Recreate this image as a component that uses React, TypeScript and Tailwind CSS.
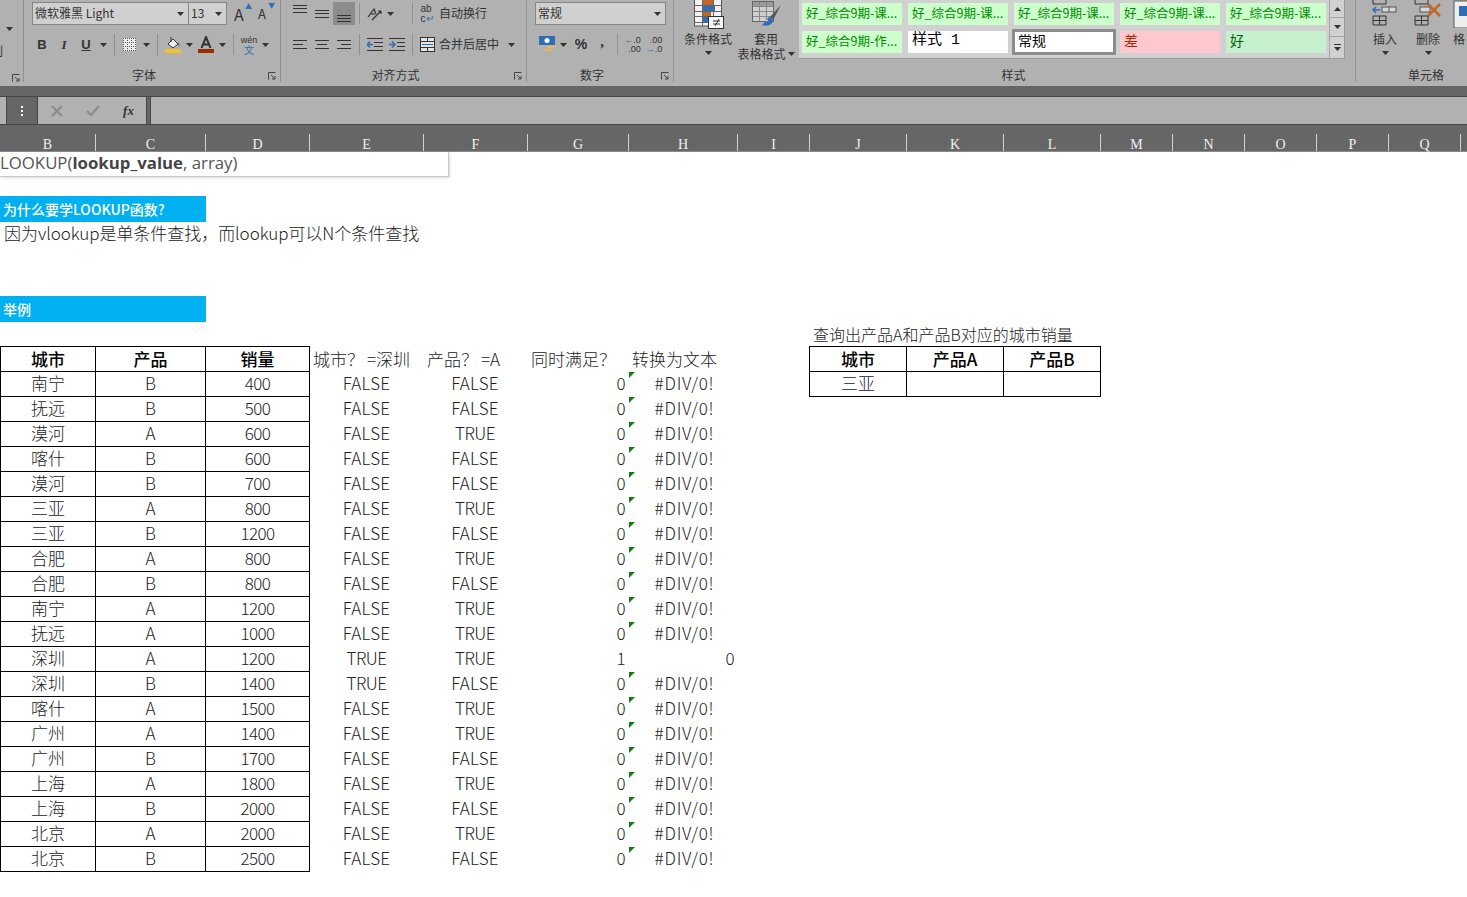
import React from 'react'

const data: [string, string, number][] = [
  ['南宁', 'B', 400], ['抚远', 'B', 500], ['漠河', 'A', 600], ['喀什', 'B', 600], ['漠河', 'B', 700],
  ['三亚', 'A', 800], ['三亚', 'B', 1200], ['合肥', 'A', 800], ['合肥', 'B', 800], ['南宁', 'A', 1200],
  ['抚远', 'A', 1000], ['深圳', 'A', 1200], ['深圳', 'B', 1400], ['喀什', 'A', 1500], ['广州', 'A', 1400],
  ['广州', 'B', 1700], ['上海', 'A', 1800], ['上海', 'B', 2000], ['北京', 'A', 2000], ['北京', 'B', 2500],
]

const headers = ['B', 'C', 'D', 'E', 'F', 'G', 'H', 'I', 'J', 'K', 'L', 'M', 'N', 'O', 'P', 'Q']

const Caret = ({ className = '' }: { className?: string }) => (
  <svg width="7" height="4" viewBox="0 0 7 4" className={className}><path d="M0 0h7L3.5 4z" fill="#333" /></svg>
)

const Sep = () => <div className="w-px h-[21px] bg-[#8f8f8f] shrink-0" />

const Launcher = () => (
  <svg width="8" height="8" viewBox="0 0 8 8" className="shrink-0">
    <path d="M0.5 7.5V0.5H7.5M3 3L7 7M7 4V7H4" fill="none" stroke="#444" strokeWidth="1" />
  </svg>
)

const Slot = ({ w = 22, children, active }: { w?: number; children?: React.ReactNode; active?: boolean }) => (
  <div className={`h-[23px] flex items-center justify-center shrink-0 ${active ? 'bg-[#8c8c8c]' : ''}`} style={{ width: w }}>{children}</div>
)

// 对齐图标: 三条横线
const Lines = ({ ys, widths = [14, 14, 14], align = 'l' }: { ys: number[]; widths?: number[]; align?: 'l' | 'c' | 'r' }) => (
  <svg width="14" height="22" viewBox="0 0 14 22">
    {ys.map((y, i) => {
      const x = align === 'l' ? 0 : align === 'r' ? 14 - widths[i] : (14 - widths[i]) / 2
      return <rect key={i} x={x} y={y} width={widths[i]} height="1" fill="#333" />
    })}
  </svg>
)

const Combo = ({ label, w, className = '' }: { label: string; w: number; className?: string }) => (
  <div className={`h-[23px] bg-[#d0d0d0] border border-[#858585] flex items-center justify-between pl-[2px] pr-[4px] text-[12px] text-[#333] shrink-0 ${className}`} style={{ width: w }}>
    <span className="pb-[2px]">{label}</span>
    <Caret />
  </div>
)

const GroupFooter = ({ label, launcher = true }: { label: string; launcher?: boolean }) => (
  <div className="absolute -bottom-[1px] left-0 right-[4px] flex items-center justify-center text-[12px] leading-[16px] text-[#333]">
    <span className={launcher ? 'pr-[12px]' : 'pl-[2px]'}>{label}</span>
    {launcher && <span className="absolute right-0 top-[5px]"><Launcher /></span>}
  </div>
)

const Group = ({ w, label, launcher, children }: { w: number; label: string; launcher?: boolean; children: React.ReactNode }) => (
  <div className="relative h-[82px] shrink-0 border-r border-[#8f8f8f]" style={{ width: w }}>
    {children}
    <GroupFooter label={label} launcher={launcher} />
  </div>
)

const StyleChip = ({ label, className }: { label: string; className: string }) => (
  <div className={`h-[22px] flex items-center pl-[4px] whitespace-nowrap overflow-hidden ${className}`}>{label}</div>
)

function Ribbon() {
  const green = 'bg-[#ccffcc] text-[#008a00] text-[12.500px] pb-[2px]'
  return (
    <div className="h-[86px] bg-[#b1b1b1] flex overflow-hidden text-[#333]">
      <div className="relative w-[24px] h-[82px] shrink-0 border-r border-[#8f8f8f]">
        <Caret className="absolute left-[6px] top-[27px]" />
        <span className="absolute left-[-9px] top-[42px] text-[12px]">刷</span>
        <span className="absolute right-[3px] bottom-[0px]"><Launcher /></span>
      </div>

      {/* 字体 */}
      <Group w={257} label="字体" launcher>
        <div className="flex items-center pl-[8px] pt-[2px]">
          <Combo label="微软雅黑 Light" w={157} />
          <Combo label="13" w={39} className="-ml-px" />
          <div className="ml-[7px] text-[16px] leading-none relative w-[16px]">A<span className="absolute -right-[2px] top-[-3px] text-[#2f6db5] text-[7px]">▲</span></div>
          <div className="ml-[8px] text-[13px] leading-none relative w-[14px]">A<span className="absolute -right-[3px] top-[-5px] text-[#2f6db5] text-[7px]">▼</span></div>
        </div>
        <div className="flex items-center pl-[7px] mt-[8px]">
          <Slot><b className="text-[13px] font-['Liberation_Sans',sans-serif]">B</b></Slot>
          <Slot><i className="text-[13px] font-bold font-['Liberation_Serif',serif]">I</i></Slot>
          <Slot><b className="text-[13px] underline font-['Liberation_Sans',sans-serif]">U</b></Slot>
          <Slot w={13}><Caret /></Slot>
          <div className="ml-[4px]"><Sep /></div>
          <div className="ml-[3px]"><Slot>
            <svg width="13" height="13" viewBox="0 0 13 13"><rect width="13" height="13" fill="#ececec" /><path d="M0 .5h13M0 4.500h13M0 8.500h13M0 12.500h13M.5 0v13M4.500 0v13M8.500 0v13M12.500 0v13" stroke="#555" strokeDasharray="1 1" /></svg>
          </Slot></div>
          <Slot w={13}><Caret /></Slot>
          <div className="ml-[4px]"><Sep /></div>
          <div className="ml-[4px]"><Slot>
            <svg width="16" height="17" viewBox="0 0 16 17"><path d="M3 8L8 3l5 5-5 4z" fill="#eee" stroke="#333" /><path d="M6 1v5" stroke="#333" /><path d="M13 6c2 1 2 4 1 5z" fill="#2f6db5" /><rect y="13" width="16" height="4" fill="#f0c428" /></svg>
          </Slot></div>
          <Slot w={11}><Caret /></Slot>
          <Slot>
            <svg width="16" height="17" viewBox="0 0 16 17"><path d="M3.500 12L8 1l4.500 11M5 8.500h6" fill="none" stroke="#333" strokeWidth="2" /><rect y="13" width="16" height="4" fill="#9c2a00" /></svg>
          </Slot>
          <Slot w={11}><Caret /></Slot>
          <div className="ml-[5px]"><Sep /></div>
          <div className="ml-[4px]"><Slot>
            <div className="flex flex-col items-center">
              <span className="text-[9px] leading-[10px] font-['Liberation_Sans',sans-serif]">wén</span>
              <span className="text-[10px] leading-[10px] text-[#2f6db5]">文</span>
            </div>
          </Slot></div>
          <Slot w={11}><Caret /></Slot>
        </div>
      </Group>

      {/* 对齐方式 */}
      <Group w={246} label="对齐方式" launcher>
        <div className="flex items-center pl-[8px] pt-[2px]">
          <Slot><Lines ys={[2, 5, 9]} /></Slot>
          <Slot><Lines ys={[7, 10, 14]} /></Slot>
          <Slot active><Lines ys={[12, 15, 18]} /></Slot>
          <div className="ml-[4px]"><Sep /></div>
          <div className="ml-[4px]"><Slot>
            <svg width="16" height="16" viewBox="0 0 16 16"><path d="M1 11L7 3l2 5M3 8h5M5 14L14 5M14 5h-3M14 5v3" fill="none" stroke="#333" strokeWidth="1.200" /></svg>
          </Slot></div>
          <Slot w={8}><Caret /></Slot>
          <div className="ml-[18px]"><Sep /></div>
          <div className="ml-[4px]"><Slot w={20}>
            <div className="flex flex-col items-start font-['Liberation_Sans',sans-serif]">
              <span className="text-[10px] leading-[10px]">ab</span>
              <span className="text-[10px] leading-[10px]">c<span className="text-[#2f6db5]">↵</span></span>
            </div>
          </Slot></div>
          <span className="ml-[2px] pb-[2px] text-[12px]">自动换行</span>
        </div>
        <div className="flex items-center pl-[8px] mt-[8px]">
          <Slot><Lines ys={[6, 10, 14]} widths={[14, 10, 14]} /></Slot>
          <Slot><Lines ys={[6, 10, 14]} widths={[14, 10, 14]} align="c" /></Slot>
          <Slot><Lines ys={[6, 10, 14]} widths={[14, 10, 14]} align="r" /></Slot>
          <div className="ml-[4px]"><Sep /></div>
          <div className="ml-[4px]"><Slot>
            <svg width="16" height="14" viewBox="0 0 16 14"><path d="M0 .5h16M7 4.500h9M7 8.500h9M0 12.500h16" stroke="#333" /><path d="M0 6.500h6M3 3.500L0 6.500l3 3" stroke="#2f6db5" strokeWidth="1.500" fill="none" /></svg>
          </Slot></div>
          <Slot>
            <svg width="16" height="14" viewBox="0 0 16 14"><path d="M0 .5h16M8 4.500h8M8 8.500h8M0 12.500h16" stroke="#333" /><path d="M0 6.500h6M3 3.500l3 3-3 3" stroke="#2f6db5" strokeWidth="1.500" fill="none" /></svg>
          </Slot>
          <div className="ml-[4px]"><Sep /></div>
          <div className="ml-[4px]"><Slot w={20}>
            <svg width="15" height="15" viewBox="0 0 15 15"><rect x=".5" y=".5" width="14" height="14" fill="#e4e4e4" stroke="#333" /><path d="M0 4.500h15M0 10.500h15M7.500 0v4M7.500 11v4" stroke="#333" /><path d="M2 7.500h11" stroke="#2f6db5" /></svg>
          </Slot></div>
          <span className="ml-[2px] pb-[2px] text-[12px]">合并后居中</span>
          <Caret className="ml-[9px]" />
        </div>
      </Group>

      {/* 数字 */}
      <Group w={147} label="数字" launcher>
        <div className="flex items-center pl-[8px] pt-[2px]">
          <Combo label="常规" w={131} />
        </div>
        <div className="flex items-center pl-[8px] mt-[8px]">
          <Slot w={24}>
            <svg width="17" height="18" viewBox="0 0 17 18"><rect width="16" height="9" fill="#2f6db5" /><circle cx="8" cy="4.500" r="2.500" fill="#fff" /><ellipse cx="12" cy="11" rx="4" ry="1.500" fill="#d9b86a" /><ellipse cx="9" cy="14" rx="4" ry="1.500" fill="#d9b86a" /></svg>
          </Slot>
          <Slot w={8}><Caret /></Slot>
          <div className="ml-[3px]"><Slot><span className="text-[14px] font-semibold font-['Liberation_Sans',sans-serif]">%</span></Slot></div>
          <Slot w={20}><span className="text-[15px] font-bold font-['Liberation_Serif',serif] -mt-[6px]">,</span></Slot>
          <div className="ml-[5px]"><Sep /></div>
          <div className="ml-[4px]"><Slot w={21}>
            <div className="flex flex-col text-right font-['Liberation_Sans',sans-serif]"><span className="text-[9px] leading-[9px]"><span className="text-[#2f6db5]">←</span>.0</span><span className="text-[9px] leading-[9px]">.00</span></div>
          </Slot></div>
          <Slot w={22}>
            <div className="flex flex-col text-right font-['Liberation_Sans',sans-serif]"><span className="text-[9px] leading-[9px]">.00</span><span className="text-[9px] leading-[9px]"><span className="text-[#2f6db5]">→</span>.0</span></div>
          </Slot>
        </div>
      </Group>

      {/* 样式 */}
      <Group w={682} label="样式" launcher={false}>
        <div className="flex items-start">
          <div className="w-[68px] shrink-0 flex flex-col items-center">
            <div className="h-[31px] ml-[2px]">
              <svg width="30" height="29" viewBox="0 0 30 29">
                <rect x=".5" y="-4" width="27" height="30" fill="#f2f2f2" stroke="#555" />
                <path d="M0 5.500h28M0 11.500h28M0 16.500h28M0 22.500h28M8.500 -4v30M19.500 -4v30" stroke="#666" />
                <rect x="9" y="0" width="10" height="5" fill="#c0682a" />
                <rect x="9" y="6" width="12" height="5" fill="#2f6db5" />
                <rect x="9" y="12" width="8" height="4" fill="#c0682a" />
                <rect x="9" y="17" width="6" height="5" fill="#2f6db5" />
                <rect x="14.500" y="16.500" width="15" height="12" fill="#f6f6f6" stroke="#333" />
                <path d="M19 21h7M19 24h7M25 19l-4 7" stroke="#333" />
              </svg>
            </div>
            <span className="text-[12px] leading-[16px]">条件格式</span>
            <Caret className="mt-[4px]" />
          </div>
          <div className="w-[48px] shrink-0 flex flex-col items-center">
            <div className="h-[31px] ml-[2px]">
              <svg width="30" height="29" viewBox="0 0 30 29">
                <rect x=".5" y="1.500" width="21" height="20" fill="#cfcfcf" stroke="#666" />
                <rect x="1" y="2" width="20" height="4" fill="#9a9a9a" />
                <path d="M1 6.500h20M1 11.500h20M1 16.500h20M7.500 2v19M14.500 2v19" stroke="#888" />
                <path d="M29 5L18 17l3 3z" fill="#555" />
                <path d="M18 17c-3 0-3 4-8 8 6 2 11-1 11-5z" fill="#2f6db5" />
                <path d="M14 21l2-1" stroke="#fff" />
              </svg>
            </div>
            <span className="text-[12px] leading-[16px]">套用</span>
            <span className="relative text-[12px] leading-[15px] whitespace-nowrap -ml-[9px] -mt-[1px]">
              表格格式
              <Caret className="absolute -right-[9px] top-[6px]" />
            </span>
          </div>
          <div className="w-[9px] shrink-0" />
          <div className="w-[546px] h-[59px] bg-[#d1d1d1] border-r border-b border-[#9a9a9a] flex shrink-0">
            <div className="w-[530px] pl-[3px] pt-[3px] grid grid-cols-[100px_100px_100px_100px_100px] gap-x-[6px] gap-y-[6px] auto-rows-[22px]">
              <StyleChip label="好_综合9期-课..." className={green} />
              <StyleChip label="好_综合9期-课..." className={green} />
              <StyleChip label="好_综合9期-课..." className={green} />
              <StyleChip label="好_综合9期-课..." className={green} />
              <StyleChip label="好_综合9期-课..." className={green} />
              <StyleChip label="好_综合9期-作..." className={green} />
              <StyleChip label="样式  1" className="bg-white text-black text-[15px] pb-[2px] font-['Liberation_Mono','Noto_Sans_CJK_SC',monospace]" />
              <StyleChip label="常规" className="bg-white text-black text-[14px] pb-[4px] outline-[3px] outline-[#8c8c8c] -outline-offset-[1px]" />
              <StyleChip label="差" className="bg-[#ffc7ce] text-[#a52a00] text-[14px] pb-[4px]" />
              <StyleChip label="好" className="bg-[#c6efce] text-[#006100] text-[14px] pb-[4px]" />
            </div>
            <div className="w-[15px] ml-auto flex flex-col border-l border-[#a5a5a5]">
              <div className="h-[18px] flex items-center justify-center border-b border-[#a5a5a5]"><Caret className="rotate-180" /></div>
              <div className="h-[19px] flex items-center justify-center border-b border-[#a5a5a5]"><Caret /></div>
              <div className="h-[20px] flex flex-col gap-[2px] items-center justify-center"><div className="w-[7px] h-px bg-[#333]" /><Caret /></div>
            </div>
          </div>
        </div>
      </Group>

      {/* 单元格 */}
      <div className="relative flex-1 h-[82px]">
        <div className="flex">
          <div className="w-[56px] ml-[1px] flex flex-col items-center">
            <div className="h-[30px]">
              <svg width="28" height="26" viewBox="0 0 28 26"><path d="M2 -4h13v8H2zM2 16h13v9H2zM8.500 16v9M2 20.500h13" fill="none" stroke="#333" /><path d="M2 10h7M5 7l-3 3 3 3" stroke="#2f6db5" strokeWidth="1.500" fill="none" /><rect x="11" y="7" width="14" height="5" fill="#d8d8d8" stroke="#555" /><path d="M18 7v5" stroke="#555" /></svg>
            </div>
            <span className="text-[12px] leading-[16px] mt-[1px]">插入</span>
            <Caret className="mt-[4px]" />
          </div>
          <div className="w-[30px] flex flex-col items-center">
            <div className="h-[30px]">
              <svg width="30" height="26" viewBox="0 0 30 26"><path d="M2 -4h13v8H2zM2 16h13v9H2zM8.500 16v9M2 20.500h13" fill="none" stroke="#333" /><rect x="7" y="7" width="10" height="5" fill="#d8d8d8" stroke="#555" /><path d="M15 4l12 12M27 4L15 16" stroke="#c0682a" strokeWidth="2.500" /></svg>
            </div>
            <span className="text-[12px] leading-[16px] mt-[1px] whitespace-nowrap">删除</span>
            <Caret className="mt-[4px]" />
          </div>
          <div className="ml-[10px] flex flex-col items-start">
            <div className="h-[30px]">
              <svg width="22" height="28" viewBox="0 0 22 28"><rect x="1" y="1" width="20" height="27" fill="#eee" stroke="#555" /><rect x="6" y="6" width="16" height="10" fill="#2f6db5" /></svg>
            </div>
            <span className="text-[12px] leading-[16px] mt-[1px]">格</span>
          </div>
        </div>
        <div className="absolute -bottom-[1px] left-[52px] text-[12px] leading-[16px]">单元格</div>
      </div>
    </div>
  )
}

function FormulaBar() {
  return (
    <>
      <div className="h-[10px] bg-[#666666]" />
      <div className="h-[29px] bg-[#666666] flex border-y border-[#474747]">
        <div className="w-[7px] bg-[#b1b1b1] border-r border-[#474747]" />
        <div className="w-[30px] flex flex-col items-center justify-center gap-[2px]">
          <div className="w-[2px] h-[2px] bg-white" /><div className="w-[2px] h-[2px] bg-white" /><div className="w-[2px] h-[2px] bg-white" />
        </div>
        <div className="w-[110px] bg-[#b1b1b1] border-x border-[#474747] flex items-center">
          <div className="w-[37px] flex justify-center">
            <svg width="12" height="12" viewBox="0 0 12 12"><path d="M1 1l10 10M11 1L1 11" stroke="#8a8a8a" strokeWidth="2" /></svg>
          </div>
          <div className="w-[36px] flex justify-center">
            <svg width="14" height="12" viewBox="0 0 14 12"><path d="M1 6l4 4 8-9" fill="none" stroke="#8a8a8a" strokeWidth="2" /></svg>
          </div>
          <div className="w-[35px] text-center text-[13px] italic font-bold text-[#333] font-['Liberation_Serif',serif]">fx</div>
        </div>
        <div className="w-[3px]" />
        <div className="flex-1 bg-[#b1b1b1] border-l border-[#474747]" />
      </div>
    </>
  )
}

function ColumnHeaders() {
  return (
    <div className="h-[27px] bg-[#666666] border-b border-[#8a8a8a] grid grid-cols-[96px_110px_104px_114px_104px_101px_109px_72px_97px_97px_97px_72px_72px_72px_72px_72px_1fr] items-end">
      {headers.map((h) => (
        <div key={h} className="h-[17px] border-r border-[#d0d0d0] flex items-end justify-center text-[14px] leading-[12px] text-[#f0f0f0] font-['Liberation_Serif',serif]">{h}</div>
      ))}
    </div>
  )
}

const cellBox = 'flex items-center justify-center border-r border-b border-black text-[17px] leading-none'
const tableCell = `h-[25px] pb-[3px] ${cellBox}`
const headCell = `h-[26px] pb-[1px] font-medium text-black ${cellBox}`
const plain = 'h-[25px] flex items-center justify-center pb-[4px] text-[17px] leading-none'
const digits = 'tracking-[-0.6px]'
const headText = 'h-[26px] flex items-center text-[17px] whitespace-nowrap'

function Sheet() {
  return (
    <div className="relative bg-white text-[#222] font-light">
      {/* 函数提示 */}
      <div className="absolute left-0 top-0 w-[449px] h-[25px] pb-[2px] bg-white border-r border-b border-[#c8c8c8] shadow-[1px_1px_2px_rgba(0,0,0,0.15)] flex items-center text-[16.800px] font-['Open_Sans','Noto_Sans_CJK_SC',sans-serif] font-normal text-[#555] whitespace-nowrap">
        LOOKUP(<b className="font-bold text-[#444]">lookup_value</b>, array)
      </div>

      <div className="h-[44px]" />
      <div className="w-[206px] h-[26px] bg-[#00b0f0] pl-[3px] flex items-center text-[14px] font-medium text-white">为什么要学LOOKUP函数?</div>
      <div className="h-[24px] pl-[4px] pb-[2px] flex items-center text-[17px] tracking-[-0.05px]">因为vlookup是单条件查找，而lookup可以N个条件查找</div>
      <div className="h-[50px]" />
      <div className="w-[206px] h-[26px] bg-[#00b0f0] pl-[3px] flex items-center text-[14px] font-medium text-white">举例</div>

      <div className="grid grid-cols-[96px_110px_104px_113px_104px_101px_109px_72px_98px_97px_97px] grid-rows-[24px_26px] auto-rows-[25px]">
        {/* 查询标题行 */}
        <div className="col-start-9 col-span-3 h-[24px] pl-[4px] pb-[1px] flex items-center text-[16px] whitespace-nowrap">查询出产品A和产品B对应的城市销量</div>

        {/* 表头 */}
        <div className={`${headCell} col-start-1 border-l border-t`}>城市</div>
        <div className={`${headCell} border-t`}>产品</div>
        <div className={`${headCell} border-t`}>销量</div>
        <div className={`${headText} pl-[3px]`}>城市？<span className="ml-[3px]">=深圳</span></div>
        <div className={`${headText} pl-[4px]`}>产品？<span className="ml-[3px]">=A</span></div>
        <div className={`${headText} pl-[4px]`}>同时满足？</div>
        <div className={`${headText} pl-[4px]`}>转换为文本</div>
        <div />
        <div className={`${headCell} border-l border-t`}>城市</div>
        <div className={`${headCell} border-t`}>产品A</div>
        <div className={`${headCell} border-t`}>产品B</div>

        {data.map(([city, product, sales], i) => {
          const a = city === '深圳'
          const b = product === 'A'
          const both = a && b
          return (
            <React.Fragment key={i}>
              <div className={`${tableCell} col-start-1 border-l`}>{city}</div>
              <div className={tableCell}>{product}</div>
              <div className={`${tableCell} ${digits}`}>{sales}</div>
              <div className={`${plain} ${a ? 'tracking-[-0.5px]' : 'tracking-[0.2px]'}`}>{a ? 'TRUE' : 'FALSE'}</div>
              <div className={`${plain} ${b ? 'tracking-[-0.5px]' : 'tracking-[0.2px]'}`}>{b ? 'TRUE' : 'FALSE'}</div>
              <div className={`${plain} justify-end pr-[3px] ${digits}`}>{both ? 1 : 0}</div>
              {both ? (
                <div className={`${plain} justify-end pr-[3px] ${digits}`}>0</div>
              ) : (
                <div className={`${plain} relative pl-[4px] tracking-[0.8px]`}>
                  <span className="absolute left-[1px] top-0 w-0 h-0 border-t-[6px] border-r-[6px] border-t-[#107c10] border-r-transparent" />
                  #DIV/0!
                </div>
              )}
              {i === 0 && (
                <>
                  <div />
                  <div className={`${tableCell} border-l`}>三亚</div>
                  <div className={tableCell} />
                  <div className={tableCell} />
                </>
              )}
            </React.Fragment>
          )
        })}
      </div>
      <div className="h-[25px]" />
    </div>
  )
}

export default function App() {
  return (
    <div className="w-[1467px] h-[897px] overflow-hidden bg-white font-['Noto_Sans_CJK_SC',sans-serif]">
      <Ribbon />
      <FormulaBar />
      <ColumnHeaders />
      <Sheet />
    </div>
  )
}
